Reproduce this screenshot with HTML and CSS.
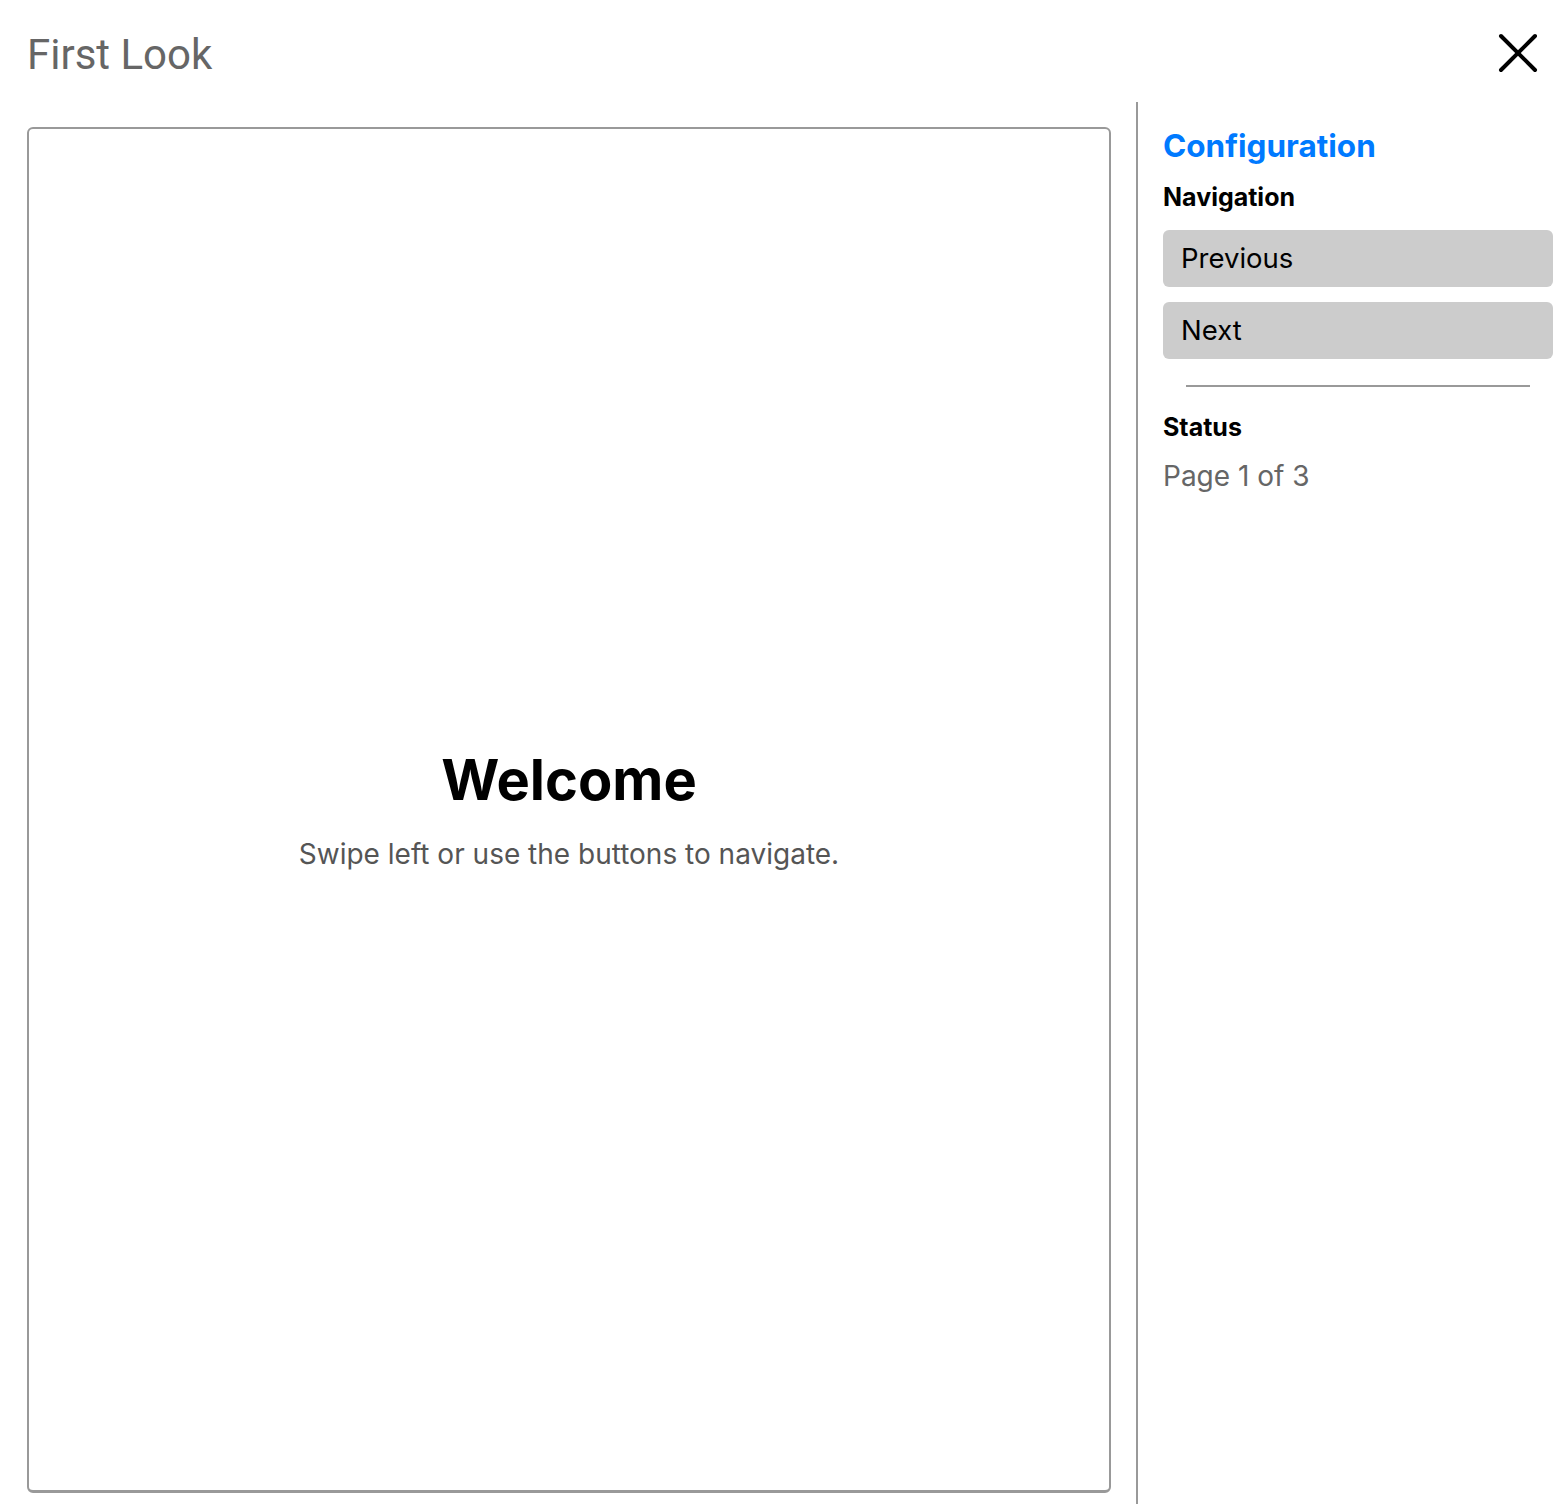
FILE: index.html
```html
<!DOCTYPE html>
<html lang="en">
<head>
    <meta charset="UTF-8">
    <meta name="viewport" content="width=device-width, initial-scale=1.0">
    <title>First Look</title>
    <link rel="stylesheet" href="styles.css">
</head>
<body>
    <div class="header">
        <div class="title">First Look</div>
        <div class="close">
            <svg width="40" height="40" viewBox="0 0 40 40">
                <line x1="3" y1="3" x2="37" y2="37" stroke="#000" stroke-width="4" stroke-linecap="round"/>
                <line x1="37" y1="3" x2="3" y2="37" stroke="#000" stroke-width="4" stroke-linecap="round"/>
            </svg>
        </div>
    </div>

    <div class="main">
        <div class="stage">
            <div class="card">
                <h1>Welcome</h1>
                <p>Swipe left or use the buttons to navigate.</p>
            </div>
        </div>

        <div class="sidebar">
            <h2>Configuration</h2>
            <h3>Navigation</h3>
            <div class="btn">Previous</div>
            <div class="btn">Next</div>
            <hr>
            <h3>Status</h3>
            <div class="status">Page 1 of 3</div>
        </div>
    </div>
</body>
</html>
```

FILE: styles.css
```css
*{
    padding: 0;
    margin: 0;
    box-sizing: border-box;
}
body{
    font-family: Inter, "Noto Sans", sans-serif;
    background-color: #fff;
    color: #000;
    line-height: 1.2;
}
.header{
    height: 102px;
    display: flex;
    justify-content: space-between;
    align-items: center;
    padding: 2px 22px 0 27px;
}
.title{
    font-family: Roboto, sans-serif;
    font-size: 42px;
    color: #666;
    margin-top: 6px;
}
.close{
    width: 40px;
    height: 40px;
    margin-top: 2px;
}
.close svg{
    display: block;
}
.main{
    height: 1402px;
    display: flex;
}
.stage{
    flex: 1;
    padding: 25px 25px 11px 27px;
}
.card{
    height: 100%;
    border: 2px solid #999;
    border-bottom-width: 3px;
    border-radius: 6px;
    display: flex;
    flex-direction: column;
    justify-content: center;
    align-items: center;
}
.card h1{
    font-size: 56px;
    font-weight: 700;
    margin-bottom: 24px;
}
.card p{
    font-size: 28px;
    color: #555;
}
.sidebar{
    width: 424px;
    border-left: 2px solid #999;
    padding: 25px 7px 0 25px;
}
.sidebar h2{
    font-size: 31.5px;
    font-weight: 700;
    color: #007aff;
    margin-bottom: 17px;
}
.sidebar h3{
    font-size: 25px;
    font-weight: 700;
    margin-bottom: 18px;
}
.btn{
    height: 57px;
    background-color: #ccc;
    border-radius: 6px;
    display: flex;
    align-items: center;
    padding-left: 18px;
    font-size: 27.5px;
    margin-bottom: 15px;
}
/* margin-top collapses with the button's 15px below */
.sidebar hr{
    border: none;
    height: 2px;
    background-color: #999;
    margin: 26px 23px 25px 23px;
}
.status{
    font-size: 28px;
    color: #666;
}
```
